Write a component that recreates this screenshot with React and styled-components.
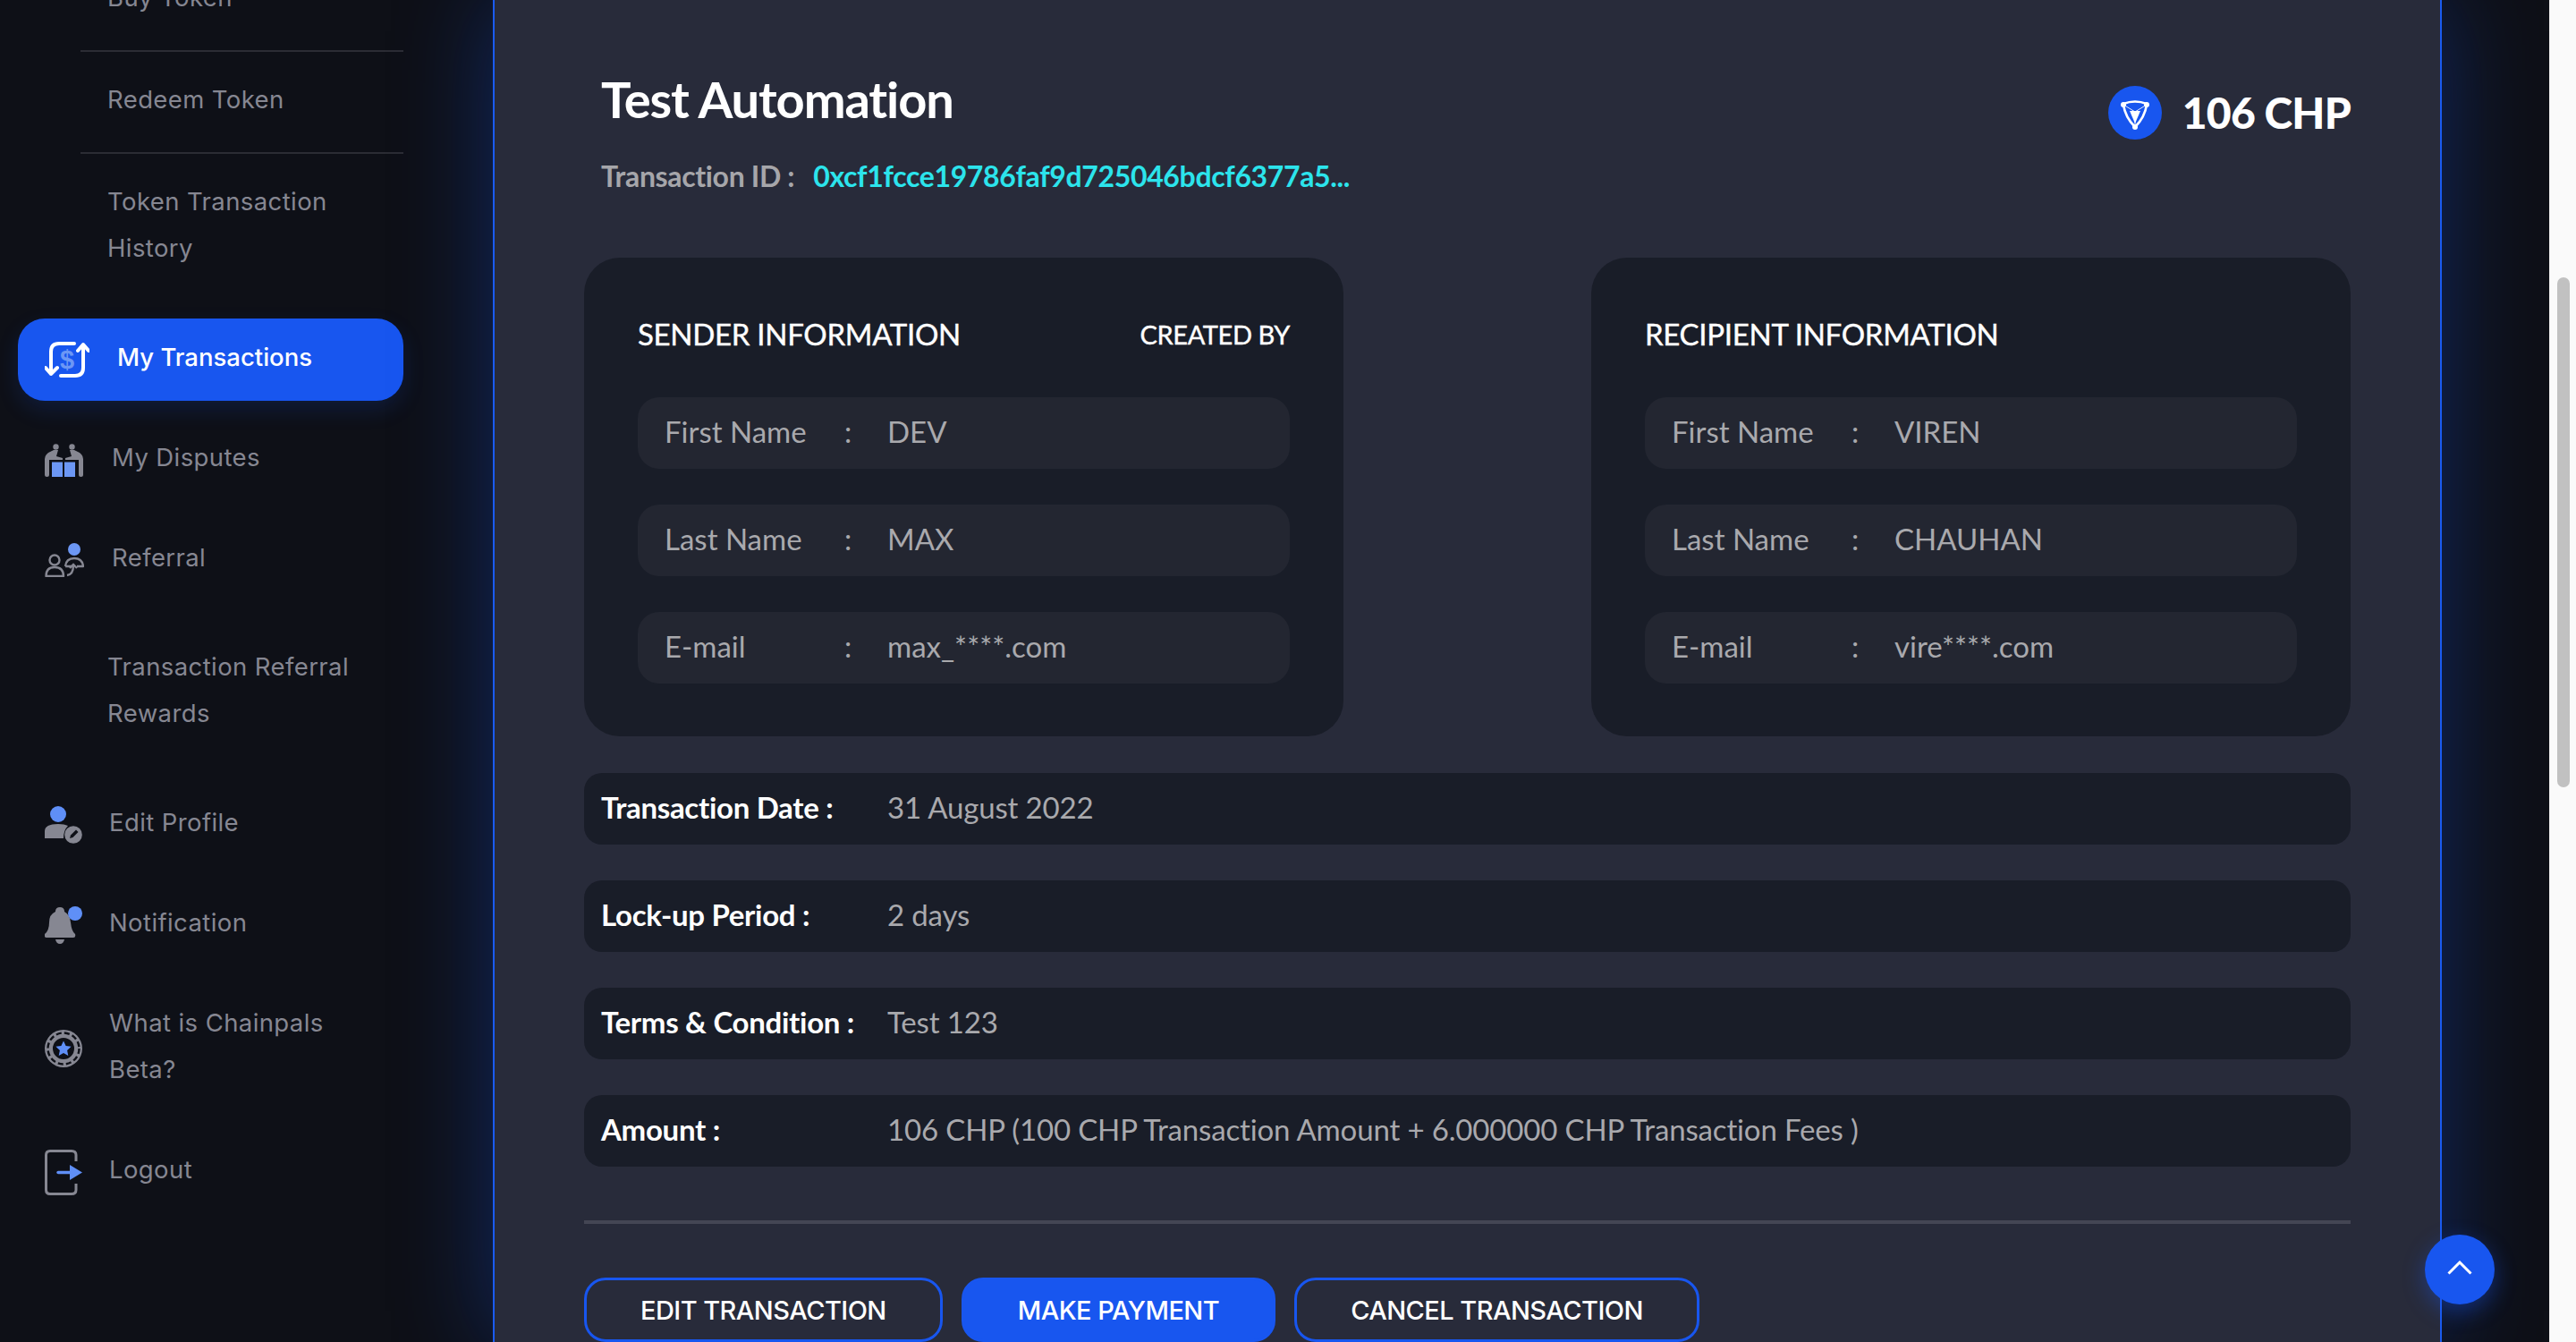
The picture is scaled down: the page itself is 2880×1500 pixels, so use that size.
import styled, { createGlobalStyle } from 'styled-components';

const GlobalStyle = createGlobalStyle`
  html, body {
    margin: 0;
    padding: 0;
    height: 1500px;
    overflow: hidden;
    background: #0e1017;
  }
  * { box-sizing: border-box; }
`;

const TransactionsIcon = () => (
  <svg width="50" height="42" viewBox="0 0 50 42" fill="none">
    <text x="25" y="31" textAnchor="middle" fontFamily="Liberation Sans" fontWeight="700" fontSize="29" fill="#6c97f5">$</text>
    <path d="M33 3H16Q7 3 7 12V37M1 30l6 7 7-7" stroke="#fff" strokeWidth="4" strokeLinecap="round" strokeLinejoin="round" />
    <path d="M18 39H34Q43 39 43 30V5M37 11l6-7 6 7" stroke="#fff" strokeWidth="4" strokeLinecap="round" strokeLinejoin="round" />
  </svg>
);

const DisputesIcon = () => (
  <svg width="43" height="37" viewBox="0 0 43 37" fill="none">
    <circle cx="12.5" cy="3.5" r="3.2" fill="#868792" />
    <circle cx="30.5" cy="3.5" r="3.2" fill="#868792" />
    <path d="M0 34.5V17Q0 13 4 10L10 7H15L13 14L20 16V18H5V34.5Q5 37 2.5 37Q0 37 0 34.5Z" fill="#868792" />
    <path d="M43 34.5V17Q43 13 39 10L33 7H28L30 14L23 16V18H38V34.5Q38 37 40.5 37Q43 37 43 34.5Z" fill="#868792" />
    <rect x="8" y="20.5" width="12" height="16.5" fill="#6c97f5" />
    <rect x="22" y="20.5" width="12" height="16.5" fill="#6c97f5" />
  </svg>
);

const ReferralIcon = () => (
  <svg width="44" height="38" viewBox="0 0 44 38" fill="none">
    <circle cx="33" cy="7" r="7" fill="#6c97f5" />
    <circle cx="11" cy="19" r="5.5" stroke="#868792" strokeWidth="2.4" />
    <path d="M1.5 37Q1.5 27 11 27Q21 27 21 37Z" stroke="#868792" strokeWidth="2.4" strokeLinejoin="round" />
    <path d="M23 26Q24 17 33 17Q42 17 43 26H36M30 26H23" stroke="#868792" strokeWidth="2.4" strokeLinejoin="round" />
    <path d="M25 36Q32 35 32 25M28 28l4-4 4 4" stroke="#868792" strokeWidth="2.4" />
  </svg>
);

const ProfileIcon = () => (
  <svg width="42" height="42" viewBox="0 0 42 42" fill="none">
    <circle cx="15" cy="9" r="9" fill="#5f8ff7" />
    <path d="M0 36V28Q0 20 15 20Q22 20 26 22Q21 27 21 36Z" fill="#868792" />
    <circle cx="32" cy="32" r="9.8" fill="#868792" />
    <path d="M28 36l1-3.5 6-6 2.5 2.5-6 6Z" fill="#0e1017" />
  </svg>
);

const BellIcon = () => (
  <svg width="42" height="42" viewBox="0 0 42 42" fill="none">
    <path d="M12 6Q12 1 17 1Q22 1 22 6Q28 9 29 18Q30 28 34 31Q35 35 32 35H2Q-1 35 0 31Q5 27 5 18Q5 9 12 6Z" fill="#868792" />
    <path d="M12 37H22Q21 42 17 42Q13 42 12 37Z" fill="#868792" />
    <circle cx="34" cy="8" r="8" fill="#5f8ff7" />
  </svg>
);

const ChipIcon = () => (
  <svg width="42" height="42" viewBox="0 0 42 42" fill="none">
    <circle cx="21" cy="21" r="21" fill="#868792" />
    <circle cx="21" cy="21" r="17.5" stroke="#0e1017" strokeWidth="2.4" strokeDasharray="6 3.2" />
    <circle cx="21" cy="21" r="13" fill="#0e1017" />
    <circle cx="21" cy="21" r="13" stroke="#868792" strokeWidth="2" />
    <path d="M21 12.5l2.6 5.6 6 .7-4.5 4.1 1.2 6L21 26l-5.3 2.9 1.2-6-4.5-4.1 6-.7Z" fill="#5f8ff7" />
  </svg>
);

const LogoutIcon = () => (
  <svg width="42" height="51" viewBox="0 0 42 51" fill="none">
    <path d="M35 13V6Q35 1.5 30 1.5H6Q1.5 1.5 1.5 6V45Q1.5 49.5 6 49.5H30Q35 49.5 35 45V38" stroke="#868792" strokeWidth="3" />
    <path d="M15 25.5H30" stroke="#5f8ff7" strokeWidth="3.4" strokeLinecap="round" />
    <path d="M28 17L42 25.5L28 34Z" fill="#5f8ff7" />
  </svg>
);

const CoinLogo = () => (
  <svg width="60" height="60" viewBox="0 0 60 60" fill="none">
    <circle cx="30" cy="30" r="30" fill="#1856ef" />
    <path d="M17 20Q30 15 43 20" stroke="#fff" strokeWidth="2.6" />
    <path d="M17 21Q19 35 30 46Q41 35 43 21" stroke="#fff" strokeWidth="2.6" />
    <path d="M17 21L30 29L43 21M30 29V46" stroke="#fff" strokeWidth="0.9" />
    <path d="M24 28H36L30 42Z" fill="#fff" />
    <circle cx="17" cy="21" r="3" fill="#fff" />
    <circle cx="43" cy="21" r="3" fill="#fff" />
    <circle cx="30" cy="46" r="3" fill="#fff" />
  </svg>
);

const ChevronUp = () => (
  <svg width="28" height="16" viewBox="0 0 28 16" fill="none">
    <path d="M1.5 14.5L14 2L26.5 14.5" stroke="#fff" strokeWidth="3" />
  </svg>
);

const subLinks = ['Buy Token', 'Redeem Token', 'Token Transaction History'];

const navGroups = [
  { label: 'My Transactions', icon: <TransactionsIcon />, active: true },
  { label: 'My Disputes', icon: <DisputesIcon />, gap: 32 },
  { label: 'Referral', icon: <ReferralIcon />, gap: 31 },
];

const navGroupsBottom = [
  { label: 'Edit Profile', icon: <ProfileIcon />, gap: 30 },
  { label: 'Notification', icon: <BellIcon />, gap: 30 },
  { label: 'What is Chainpals Beta?', icon: <ChipIcon />, gap: 30 },
  { label: 'Logout', icon: <LogoutIcon />, gap: 30 },
];

const NavRow = ({ item }) => (
  <NavItem $active={item.active}>
    <NavIcon>{item.icon}</NavIcon>
    <NavLabel $active={item.active} $gap={item.gap}>{item.label}</NavLabel>
  </NavItem>
);

const PersonCard = ({ title, createdBy, rows }) => (
  <Card>
    <CardHeader>
      <CardTitle>{title}</CardTitle>
      {createdBy && <CreatedBy>CREATED BY</CreatedBy>}
    </CardHeader>
    {rows.map((row) => (
      <InfoRow key={row[0]}>
        <InfoLabel>{row[0]}</InfoLabel>
        <InfoColon>:</InfoColon>
        <InfoValue>{row[1]}</InfoValue>
      </InfoRow>
    ))}
  </Card>
);

const details = [
  ['Transaction Date :', '31 August 2022'],
  ['Lock-up Period :', '2 days'],
  ['Terms & Condition :', 'Test 123'],
  ['Amount :', '106 CHP (100 CHP Transaction Amount + 6.000000 CHP Transaction Fees )'],
];

const App = () => {
  return (
    <Page>
      <GlobalStyle />
      <Sidebar>
        <SidebarScroll>
          <div>
            {subLinks.map((link, i) => (
              <SubLink key={link} $last={i === subLinks.length - 1}>{link}</SubLink>
            ))}
          </div>
          {navGroups.map((item) => <NavRow key={item.label} item={item} />)}
          <SubLink $last>Transaction Referral Rewards</SubLink>
          {navGroupsBottom.map((item) => <NavRow key={item.label} item={item} />)}
        </SidebarScroll>
      </Sidebar>

      <Main>
        <TopRow>
          <div>
            <Title>Test Automation</Title>
            <TxLine>
              <TxLabel>Transaction ID :</TxLabel>
              <TxHash>0xcf1fcce19786faf9d725046bdcf6377a5...</TxHash>
            </TxLine>
          </div>
          <Amount>
            <CoinLogo />
            <AmountText>106 CHP</AmountText>
          </Amount>
        </TopRow>

        <Cards>
          <PersonCard
            title="SENDER INFORMATION"
            createdBy
            rows={[['First Name', 'DEV'], ['Last Name', 'MAX'], ['E-mail', 'max_****.com']]}
          />
          <PersonCard
            title="RECIPIENT INFORMATION"
            rows={[['First Name', 'VIREN'], ['Last Name', 'CHAUHAN'], ['E-mail', 'vire****.com']]}
          />
        </Cards>

        <DetailList>
          {details.map((row) => (
            <DetailRow key={row[0]}>
              <DetailLabel>{row[0]}</DetailLabel>
              <DetailValue>{row[1]}</DetailValue>
            </DetailRow>
          ))}
        </DetailList>

        <Divider />

        <Actions>
          <ActionButton>EDIT TRANSACTION</ActionButton>
          <ActionButton $primary>MAKE PAYMENT</ActionButton>
          <ActionButton>CANCEL TRANSACTION</ActionButton>
        </Actions>
      </Main>

      <RightGutter />
      <ScrollTrack>
        <ScrollThumb />
      </ScrollTrack>

      <BackToTop>
        <ChevronUp />
      </BackToTop>
    </Page>
  );
};

export default App;

// Styled Components

const Page = styled.div`
  display: flex;
  width: 2880px;
  height: 1500px;
  overflow: hidden;
  background: #0e1017;
  position: relative;
`;

const Sidebar = styled.aside`
  width: 551px;
  flex-shrink: 0;
  overflow: hidden;
`;

const SidebarScroll = styled.nav`
  display: flex;
  flex-direction: column;
  gap: 20px;
  width: 431px;
  margin-left: 20px;
  margin-top: -56px;
  font-family: Inter, "Liberation Sans", sans-serif;
`;

const SubLink = styled.div`
  margin-left: 70px;
  padding: ${(p) => (p.$last ? '27px 40px 33px 30px' : '27px 10px 33px 30px')};
  border-bottom: ${(p) => (p.$last ? '0' : '2px solid #2b2c34')};
  color: #868792;
  font-size: 27.5px;
  letter-spacing: 0.4px;
  line-height: 52px;
  height: ${(p) => (p.$last ? 'auto' : '114px')};
`;

const NavItem = styled.div`
  display: flex;
  align-items: center;
  min-height: 92px;
  padding: 20px 0 20px 30px;
  border-radius: 30px;
  background: ${(p) => (p.$active ? '#1856ef' : 'transparent')};
  box-shadow: ${(p) => (p.$active ? '0 10px 24px rgba(24, 86, 239, 0.16)' : 'none')};
`;

const NavIcon = styled.span`
  display: flex;
  flex-shrink: 0;
`;

const NavLabel = styled.span`
  margin: -3px 0 3px ${(p) => p.$gap || 31}px;
  max-width: 290px;
  color: ${(p) => (p.$active ? '#fff' : '#868792')};
  font-size: 27.5px;
  font-weight: ${(p) => (p.$active ? 500 : 400)};
  letter-spacing: ${(p) => (p.$active ? '0' : '0.4px')};
  line-height: 52px;
`;

const Main = styled.main`
  position: relative;
  width: 2179px;
  flex-shrink: 0;
  height: 1500px;
  padding: 0 100px;
  background: #282b3a;
  border-left: 2px solid #1a5bf0;
  border-right: 2px solid #1a5bf0;
  box-shadow: 0 0 100px rgba(24, 86, 239, 0.35);
  font-family: Lato, "Liberation Sans", sans-serif;
`;

const TopRow = styled.header`
  display: flex;
  justify-content: space-between;
  align-items: flex-start;
  height: 288px;
  padding: 76px 0 0 19px;
`;

const Title = styled.h1`
  margin: 0;
  color: #fff;
  font-size: 56px;
  font-weight: 700;
  line-height: 70px;
  letter-spacing: -1.1px;
`;

const TxLine = styled.div`
  display: flex;
  margin-top: 31px;
  font-size: 32px;
  font-weight: 700;
  line-height: 40px;
  letter-spacing: -0.35px;
`;

const TxLabel = styled.span`
  color: #a6a6aa;
`;

const TxHash = styled.span`
  margin-left: 21px;
  color: #2ce4ec;
`;

const Amount = styled.div`
  display: flex;
  align-items: center;
  gap: 23px;
  margin-top: 20px;
`;

const AmountText = styled.span`
  color: #fff;
  font-size: 48px;
  font-weight: 900;
  line-height: 60px;
  letter-spacing: -0.8px;
`;

const Cards = styled.section`
  display: flex;
  justify-content: space-between;
`;

const Card = styled.div`
  width: 849px;
  height: 535px;
  padding: 60px;
  border-radius: 40px;
  background: #191d28;
`;

const CardHeader = styled.div`
  display: flex;
  justify-content: space-between;
  align-items: center;
  height: 50px;
  margin-bottom: 46px;
`;

const CardTitle = styled.h2`
  margin: 0;
  color: #fff;
  font-size: 33px;
  font-weight: 400;
  letter-spacing: -0.3px;
  -webkit-text-stroke: 0.4px #fff;
`;

const CreatedBy = styled.span`
  color: #fff;
  font-size: 29px;
  font-weight: 400;
  letter-spacing: -0.4px;
  -webkit-text-stroke: 0.4px #fff;
`;

const InfoRow = styled.div`
  display: flex;
  align-items: center;
  height: 80px;
  padding: 0 30px 5px;
  margin-bottom: 40px;
  border-radius: 24px;
  background: #232631;
  color: #a9a9ad;
  font-size: 33px;

  &:last-child {
    margin-bottom: 0;
  }
`;

const InfoLabel = styled.span`
  width: 201px;
`;

const InfoColon = styled.span`
  width: 48px;
`;

const InfoValue = styled.span``;

const DetailList = styled.section`
  display: flex;
  flex-direction: column;
  gap: 40px;
  margin-top: 41px;
`;

const DetailRow = styled.div`
  display: flex;
  align-items: center;
  height: 80px;
  padding: 0 19px 4px;
  border-radius: 20px;
  background: #191d28;
  font-size: 33px;
`;

const DetailLabel = styled.span`
  width: 320px;
  color: #fff;
  font-weight: 700;
  letter-spacing: -0.3px;
`;

const DetailValue = styled.span`
  color: #a9a9ad;
  letter-spacing: -0.15px;
`;

const Divider = styled.hr`
  height: 4px;
  margin: 60px 0 60px;
  border: 0;
  background: #444654;
`;

const Actions = styled.div`
  display: flex;
  gap: 21px;
`;

const ActionButton = styled.button`
  height: 72px;
  padding: 0 60px;
  border: 3px solid #1856ef;
  border-radius: 24px;
  background: ${(p) => (p.$primary ? '#1856ef' : 'transparent')};
  color: #fff;
  font-family: Inter, "Liberation Sans", sans-serif;
  font-size: 29px;
  font-weight: 500;
  letter-spacing: -0.55px;
`;

const RightGutter = styled.div`
  width: 120px;
  flex-shrink: 0;
`;

const ScrollTrack = styled.div`
  width: 30px;
  flex-shrink: 0;
  padding: 310px 7px 0 8px;
  background: #fafafa;
  border-left: 1px solid #ececec;
`;

const ScrollThumb = styled.div`
  height: 570px;
  border-radius: 8px;
  background: #c1c1c1;
`;

const BackToTop = styled.button`
  position: absolute;
  left: 2711px;
  top: 1380px;
  display: flex;
  align-items: center;
  justify-content: center;
  width: 78px;
  height: 78px;
  padding: 0 0 4px;
  border: 0;
  border-radius: 50%;
  background: #1856ef;
  box-shadow: 0 8px 24px rgba(24, 86, 239, 0.4);
`;
